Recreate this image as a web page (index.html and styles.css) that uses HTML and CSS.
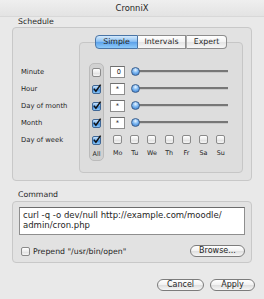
FILE: index.html
```html
<!DOCTYPE html>
<html lang="en">
<head>
  <meta charset="UTF-8">
  <title>CronniX</title>
  <link rel="stylesheet" href="styles.css">
</head>
<body>
  <div class="window">
    <div class="titlebar">CronniX</div>

    <div class="group-title">Schedule</div>
    <div class="group schedule">
      <div class="field-labels">
        <div class="field-label">Minute</div>
        <div class="field-label">Hour</div>
        <div class="field-label">Day of month</div>
        <div class="field-label">Month</div>
        <div class="field-label">Day of week</div>
      </div>

      <div class="tabview">
        <div class="tabs">
          <span class="tab tab-simple active">Simple</span>
          <span class="tab tab-intervals">Intervals</span>
          <span class="tab tab-expert">Expert</span>
        </div>
        <div class="tab-pane">
          <div class="all-column">
            <div class="cell"><span class="check"></span></div>
            <div class="cell"><span class="check on"><svg viewBox="0 0 9 9"><path d="M1.8 4.6 L3.9 7.2 L8.6 0.6"/></svg></span></div>
            <div class="cell"><span class="check on"><svg viewBox="0 0 9 9"><path d="M1.8 4.6 L3.9 7.2 L8.6 0.6"/></svg></span></div>
            <div class="cell"><span class="check on"><svg viewBox="0 0 9 9"><path d="M1.8 4.6 L3.9 7.2 L8.6 0.6"/></svg></span></div>
            <div class="cell"><span class="check on"><svg viewBox="0 0 9 9"><path d="M1.8 4.6 L3.9 7.2 L8.6 0.6"/></svg></span></div>
            <div class="small-label">All</div>
          </div>

          <div class="controls">
            <div class="control-row">
              <span class="num num-right">0</span>
              <div class="slider"><span class="knob"></span></div>
            </div>
            <div class="control-row">
              <span class="num">*</span>
              <div class="slider"><span class="knob"></span></div>
            </div>
            <div class="control-row">
              <span class="num">*</span>
              <div class="slider"><span class="knob"></span></div>
            </div>
            <div class="control-row">
              <span class="num">*</span>
              <div class="slider"><span class="knob"></span></div>
            </div>
            <div class="weekdays">
              <div class="day"><div class="cell"><span class="check"></span></div><div class="small-label">Mo</div></div>
              <div class="day"><div class="cell"><span class="check"></span></div><div class="small-label">Tu</div></div>
              <div class="day"><div class="cell"><span class="check"></span></div><div class="small-label">We</div></div>
              <div class="day"><div class="cell"><span class="check"></span></div><div class="small-label">Th</div></div>
              <div class="day"><div class="cell"><span class="check"></span></div><div class="small-label">Fr</div></div>
              <div class="day"><div class="cell"><span class="check"></span></div><div class="small-label">Sa</div></div>
              <div class="day"><div class="cell"><span class="check"></span></div><div class="small-label">Su</div></div>
            </div>
          </div>
        </div>
      </div>
    </div>

    <div class="group-title command-title">Command</div>
    <div class="group command">
      <div class="command-text">curl -q -o dev/null http://example.com/moodle/<br>admin/cron.php</div>
      <div class="command-row">
        <label class="prepend"><span class="check"></span>Prepend "/usr/bin/open"</label>
        <span class="button browse">Browse...</span>
      </div>
    </div>

    <div class="buttons">
      <span class="button cancel">Cancel</span>
      <span class="button apply">Apply</span>
    </div>
  </div>
</body>
</html>
```

FILE: styles.css
```css
body {
  margin: 0;
  font-family: "DejaVu Sans", "Liberation Sans", sans-serif;
  color: #262626;
}

.window {
  width: 264px;
  height: 299px;
  background: #e9e9e9;
  overflow: hidden;
  display: flex;
  flex-direction: column;
}

.titlebar {
  height: 17px;
  line-height: 17px;
  text-align: center;
  font-size: 8.4px;
  background: linear-gradient(#efefef, #e3e3e3);
  border-bottom: 1px solid #d8d8d8;
  box-sizing: border-box;
}

.group-title {
  height: 10px;
  line-height: 10px;
  padding-left: 18px;
  font-size: 7.8px;
}

.command-title {
  height: 12px;
  line-height: 12px;
  margin-top: 8px;
}

.group {
  margin: 0 12px;
  border: 1px solid #c8c8c8;
  border-radius: 4px;
  background: #e2e2e2;
  box-sizing: border-box;
}

/* schedule box */
.schedule {
  height: 154px;
  display: flex;
  padding: 7px 8px 0 8px;
}

.field-labels {
  width: 58px;
  padding-top: 29px;
}

.field-label {
  height: 17px;
  line-height: 17px;
  font-size: 6.8px;
}

.tabview {
  width: 164px;
  display: flex;
  flex-direction: column;
}

.tabs {
  display: flex;
  justify-content: center;
  position: relative;
  z-index: 1;
}

.tab {
  height: 14px;
  line-height: 12px;
  font-size: 7.8px;
  text-align: center;
  border: 1px solid #8d8d8d;
  background: linear-gradient(#ffffff, #f3f3f3 50%, #e4e4e4 51%, #f7f7f7);
  box-sizing: border-box;
}

.tab + .tab {
  border-left-color: #a9a9a9;
}

.tab-simple { width: 43px; border-radius: 4px 0 0 4px; }
.tab-intervals { width: 48px; border-left: none; }
.tab-expert { width: 41px; border-radius: 0 4px 4px 0; }

.tab.active {
  border-color: #4a75a6;
  background: linear-gradient(#d5eafc, #8dc1f3 45%, #5da2ea 52%, #8fcbfa);
}

.tab-pane {
  margin-top: -7px;
  height: 131px;
  border: 1px solid #c6c6c6;
  border-radius: 4px;
  background: #dddddd;
  box-sizing: border-box;
  display: flex;
  padding: 20px 0 0 9px;
  gap: 6px;
}

.all-column {
  width: 15px;
  height: 98px;
  border: 1px solid #bbbbbb;
  border-radius: 5px;
  background: #d1d1d1;
  box-sizing: border-box;
}

.cell {
  height: 17px;
  display: flex;
  align-items: center;
  justify-content: center;
}

.small-label {
  height: 11px;
  line-height: 11px;
  font-size: 6.4px;
  text-align: center;
}

.check {
  width: 9px;
  height: 9px;
  border: 1px solid #8a8a8a;
  border-radius: 2px;
  background: linear-gradient(#ffffff, #ececec 50%, #dcdcdc 51%, #f6f6f6);
  box-sizing: border-box;
  display: inline-block;
  flex: none;
}

.check.on {
  border-color: #3f6796;
  background: linear-gradient(#c9e3fb, #6eaeef 48%, #3f8ce0 52%, #8cc8f8);
}

.check svg {
  display: block;
  width: 9px;
  height: 9px;
  margin: -2px 0 0 -1px;
  overflow: visible;
}

.check svg path {
  fill: none;
  stroke: #111;
  stroke-width: 1.5;
}

.controls {
  display: flex;
  flex-direction: column;
}

.control-row {
  height: 17px;
  display: flex;
  align-items: center;
  gap: 6px;
}

.num {
  width: 15px;
  height: 12px;
  line-height: 11px;
  border: 1px solid #8e8e8e;
  border-top-color: #6f6f6f;
  background: #fff;
  box-sizing: border-box;
  font-size: 6.6px;
  text-align: center;
}

.num-right {
  text-align: right;
  padding-right: 3px;
}

.slider {
  width: 97px;
  height: 9px;
  display: flex;
  align-items: center;
  background: linear-gradient(#0000 3px, #777 3px, #777 5px, #c9c9c9 5px, #c9c9c9 6px, #0000 6px) no-repeat 4px 0 / 93px 9px;
}

.knob {
  width: 9px;
  height: 9px;
  border-radius: 50%;
  border: 1px solid #3b5f8e;
  box-sizing: border-box;
  background: radial-gradient(circle at 50% 30%, #eaf5ff 0, #7db8f2 45%, #2f72c6 100%);
}

.weekdays {
  display: grid;
  grid-template-columns: repeat(7, 17.2px);
  margin-left: -1px;
}

/* command box */
.command {
  height: 62px;
  padding: 5px 6px 0 6px;
}

.command-text {
  height: 28px;
  border: 1px solid #8e8e8e;
  border-top-color: #6c6c6c;
  background: #fff;
  box-sizing: border-box;
  padding: 2px 3px;
  font-size: 8.5px;
  line-height: 10px;
  white-space: nowrap;
}

.command-row {
  margin-top: 10px;
  height: 12px;
  display: flex;
  align-items: center;
  justify-content: space-between;
}

.prepend {
  display: flex;
  align-items: center;
  gap: 3px;
  padding-left: 2px;
  font-size: 7.8px;
}

.button {
  height: 12px;
  line-height: 10px;
  border: 1px solid #7c7c7c;
  border-radius: 6px;
  background: linear-gradient(#ffffff, #f1f1f1 50%, #dedede 51%, #f6f6f6);
  box-sizing: border-box;
  text-align: center;
  font-size: 8px;
}

.browse { width: 55px; }

.buttons {
  margin-top: 16px;
  display: flex;
  justify-content: flex-end;
  gap: 6px;
  padding-right: 9px;
}

.cancel { width: 47px; }
.apply { width: 45px; }
```
